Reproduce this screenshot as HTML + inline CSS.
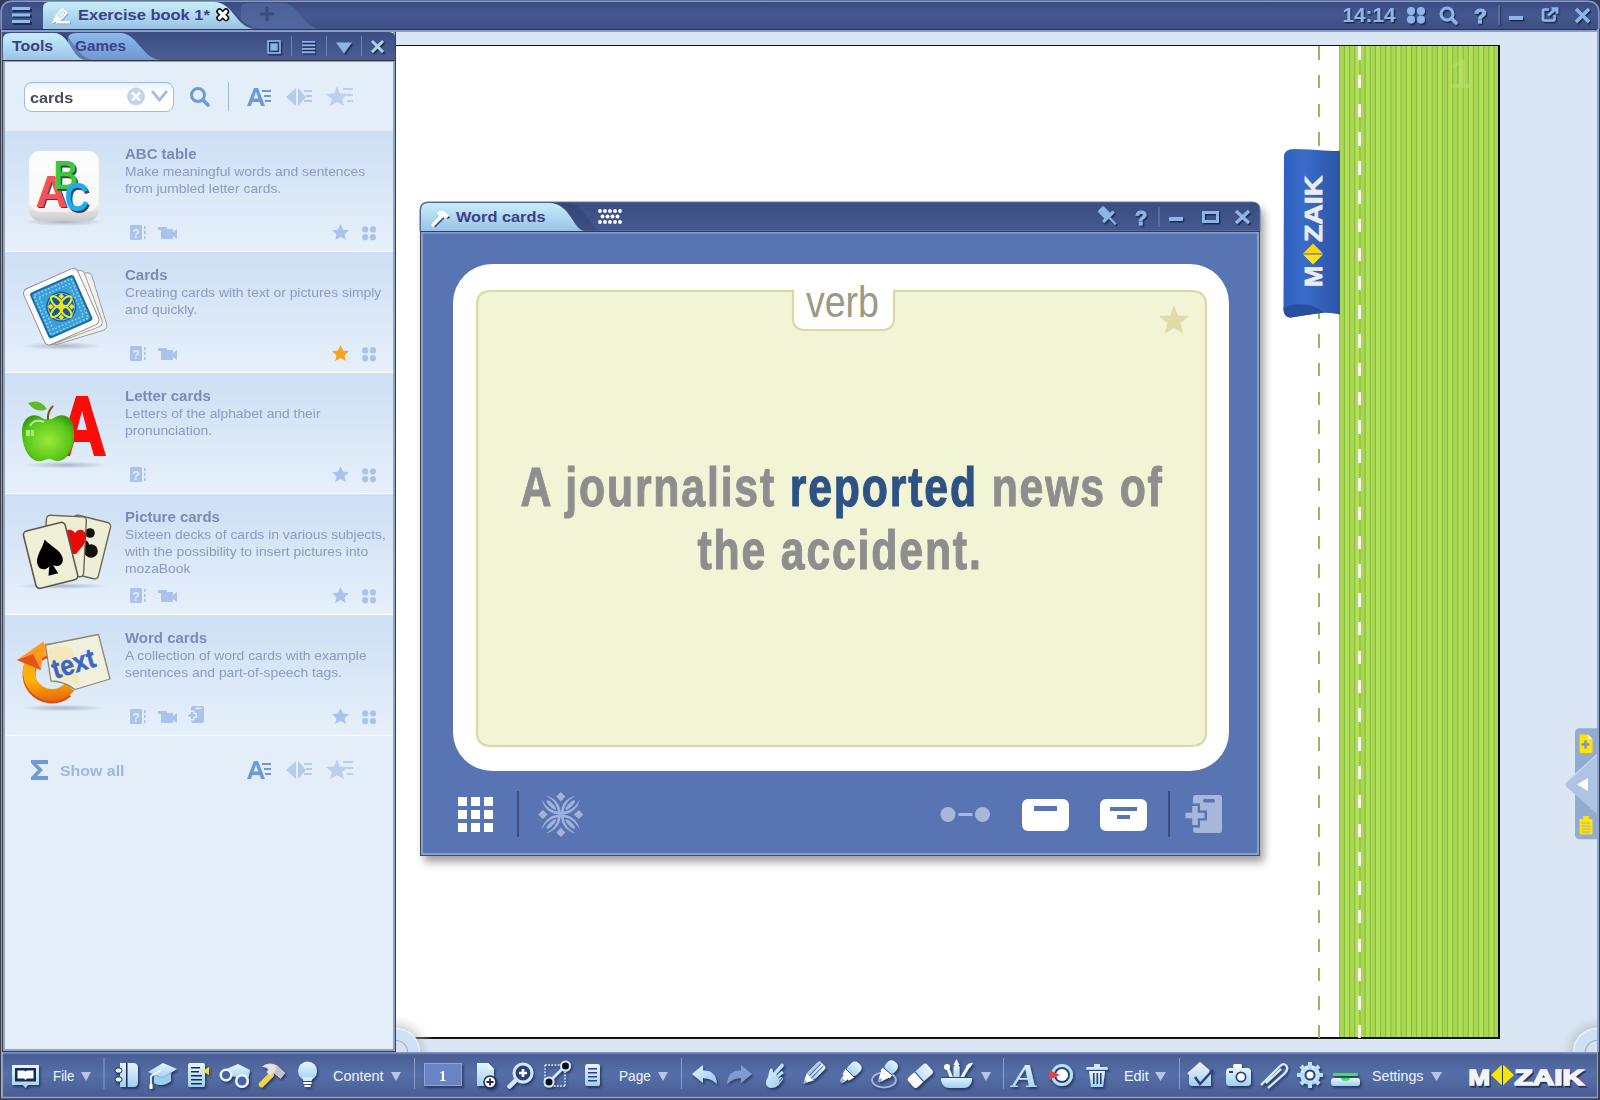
<!DOCTYPE html>
<html><head><meta charset="utf-8">
<style>
*{margin:0;padding:0;box-sizing:border-box}
html,body{width:1600px;height:1100px;overflow:hidden}
body{position:relative;background:#dbe6f4;font-family:"Liberation Sans",sans-serif}
.a{position:absolute}
svg{position:absolute;overflow:visible}
.t{position:absolute;white-space:nowrap;transform-origin:0 0}
/* panel */
#pn{left:2px;top:31px;width:394px;height:1021px;background:#e4eef9;border:1px solid #3a3f4c;border-top:none;box-shadow:inset 2px 0 0 #8fa3cc,inset -2px 0 0 #8fa3cc,inset 0 -2px 0 #8fa3cc}
#pnl{left:3px;top:61px;width:392px;height:990px;border:2px solid #8fa3cc;border-top:1px solid #8fa3cc;border-right-width:1px}
.it{position:absolute;left:5px;width:388px;height:120px;background:linear-gradient(#cddff4,#e6f0fa)}
.sep{position:absolute;left:5px;width:388px;height:1px;background:#fff}
.ti{position:absolute;margin-top:1px;left:125px;font-weight:bold;font-size:14px;color:#7a8bb6;white-space:nowrap;transform-origin:0 0;transform:scaleX(1.07)}
.ds{position:absolute;margin-top:1px;left:125px;font-size:13px;line-height:17px;color:#8a9bc1;white-space:nowrap;transform-origin:0 0;transform:scaleX(1.065)}
/* page */
#pg{left:396px;top:45px;width:1104px;height:994px;background:#fff;border-top:1px solid #111;border-right:2px solid #0a0a14;border-bottom:2px solid #111}
/* word cards window */
#wc{left:420px;top:202px;width:840px;height:654px;background:#5874b2;border:1px solid #454b5a;border-top:none;border-radius:8px 8px 0 0;box-shadow:inset 0 -2px 0 #8b9ecc,inset 2px 0 0 #8b9ecc,inset -2px 0 0 #8b9ecc,4px 6px 9px rgba(0,0,0,.38)}
#bt{left:0;top:1051px;width:1600px;height:49px}
</style></head><body>

<!-- ============ TITLE BAR ============ -->
<svg width="1600" height="32" style="left:0;top:0">
  <defs>
    <linearGradient id="gtb" x1="0" y1="0" x2="0" y2="1"><stop offset="0" stop-color="#394a7e"/><stop offset=".5" stop-color="#45588e"/><stop offset="1" stop-color="#3b4d83"/></linearGradient>
    <linearGradient id="gtab" x1="0" y1="0" x2="0" y2="1"><stop offset="0" stop-color="#c8eff9"/><stop offset="1" stop-color="#99c2e6"/></linearGradient>
    <linearGradient id="gtab2" x1="0" y1="0" x2="0" y2="1"><stop offset="0" stop-color="#4b6198"/><stop offset="1" stop-color="#51689e"/></linearGradient>
    <filter id="tsh" x="-20%" y="-20%" width="150%" height="150%"><feDropShadow dx="1.3" dy="1.5" stdDeviation=".5" flood-color="#141a3a" flood-opacity=".85"/></filter>
  </defs>
  <rect x="0" y="0" width="1600" height="30" fill="url(#gtb)"/>
  <path d="M0,13 Q0,0 13,0 L0,0Z" fill="#343c5e"/>
  <path d="M1600,13 Q1600,0 1587,0 L1600,0Z" fill="#343c5e"/>
  <path d="M1.2,30 V13 Q1.2,1.2 13,1.2 H1587 Q1598.8,1.2 1598.8,13 V30" fill="none" stroke="#8a9cc6" stroke-width="1.4"/>
  <rect x="0" y="29" width="1600" height="1" fill="#2e3340"/>
  <rect x="0" y="30" width="1600" height="2" fill="#8c9ec8"/>
  <!-- hamburger -->
  <g fill="#1f2752" opacity=".9"><rect x="13" y="9" width="19" height="3"/><rect x="13" y="15" width="19" height="3"/><rect x="13" y="22" width="19" height="3"/></g>
  <g fill="#8ebcec"><rect x="12" y="7" width="18" height="3"/><rect x="12" y="13.5" width="18" height="3"/><rect x="12" y="20" width="18" height="3"/></g>
  <!-- plus tab -->
  <path d="M241,29 V9 Q241,3 248,3 H282 C300,3 302,29 322,29 Z" fill="url(#gtab2)"/>
  <path d="M214,2 C236,2 238,29 262,29 L240,29 Z" fill="#2f3d6a" opacity=".5"/>
  <path d="M260,14 H274 M267,7 V21" stroke="#3a4c80" stroke-width="3"/>
  <!-- active tab -->
  <path d="M43,29 V8 Q43,2 49,2 H214 C234,2 236,29 256,29 Z" fill="url(#gtab)"/>
  <!-- pencil -->
  <g transform="translate(1,1)" fill="#4d7fb0" opacity=".45">
    <path d="M55.5,15.5 L62.5,8 L68,13 L61,20.5 Z M55.5,15.5 L61,20.5 L52,23 Z"/><rect x="56" y="21" width="14" height="2.4"/>
  </g>
  <path d="M55.5,15.5 L62.5,8 L68,13 L61,20.5 Z" fill="#fff"/>
  <path d="M57.8,15.3 L62.6,10.2 L65.7,13 L60.9,18.2 Z" fill="#a7d3ef"/>
  <path d="M59.2,15.2 L62.7,11.6 L64.3,13.1 L60.8,16.7 Z" fill="#fff"/>
  <path d="M55.5,15.5 L61,20.5 L52,23 Z" fill="#fff"/>
  <rect x="56" y="21" width="14" height="2.4" fill="#fff"/>
  <text x="78" y="20.2" font-family="Liberation Sans" font-weight="bold" font-size="15" fill="#3c3f8d" transform="translate(78,0) scale(1.1,1) translate(-78,0)">Exercise book 1*</text>
  <!-- tab close x -->
  <path d="M219.5,11.5 L226,18 M226,11.5 L219.5,18" stroke="#111" stroke-width="6.5" stroke-linecap="round"/>
  <path d="M219.5,11.5 L226,18 M226,11.5 L219.5,18" stroke="#fff" stroke-width="3.2" stroke-linecap="round"/>
  <!-- right side -->
  <g filter="url(#tsh)">
  <text transform="translate(1342.5,22.3) scale(1.04,1)" font-family="Liberation Sans" font-weight="bold" font-size="20" fill="#8cb6e7">14:14</text>
  <g fill="#8cb6e7">
    <circle cx="1411" cy="11" r="4"/><circle cx="1421" cy="11" r="4"/><circle cx="1411" cy="19.5" r="4"/><circle cx="1421" cy="19.5" r="4"/>
  </g>
  <g stroke="#8cb6e7" fill="none" stroke-width="3">
    <circle cx="1447" cy="14" r="6"/><path d="M1451.5,18.5 L1456,23" stroke-width="3.5" stroke-linecap="round"/>
  </g>
  <text x="1474" y="23" font-family="Liberation Sans" font-weight="bold" font-size="21" fill="#8cb6e7" stroke="#8cb6e7" stroke-width="1">?</text>
  <rect x="1498.5" y="5" width="1" height="20" fill="#6f84b5"/>
  <rect x="1509" y="16" width="14" height="4" fill="#8cb6e7"/>
  <g stroke="#8cb6e7" fill="none" stroke-width="2.6">
    <path d="M1549,9.5 H1544 Q1543,9.5 1543,11 V19 Q1543,20.5 1544.5,20.5 H1553 Q1554.5,20.5 1554.5,19 V15"/>
    <path d="M1548,15.5 L1556,8.5 M1551.5,8.5 H1557 V13.5"/>
  </g>
  <path d="M1576,9 L1589,22 M1589,9 L1576,22" stroke="#8cb6e7" stroke-width="3.2"/>
  </g>
</svg>

<!-- outer frame -->
<div class="a" style="left:0;top:29px;width:2px;height:1023px;background:#8fa3cc;border-left:1px solid #3a3d48"></div>
<div class="a" style="left:1597px;top:29px;width:3px;height:1023px;background:#8fa3cc;border-right:1px solid #3a3d48"></div>
<!-- ============ LEFT PANEL ============ -->
<div id="pn" class="a"></div>
<svg width="394" height="32" style="left:2px;top:30px">
  <defs>
    <linearGradient id="gph" x1="0" y1="0" x2="0" y2="1"><stop offset="0" stop-color="#3b4e84"/><stop offset="1" stop-color="#4a5e95"/></linearGradient>
    <linearGradient id="gtt" x1="0" y1="0" x2="0" y2="1"><stop offset="0" stop-color="#c7eef9"/><stop offset="1" stop-color="#9bc4e7"/></linearGradient>
    <linearGradient id="gtg" x1="0" y1="0" x2="0" y2="1"><stop offset="0" stop-color="#8fbaea"/><stop offset="1" stop-color="#6f97d2"/></linearGradient>
  </defs>
  <rect x="0" y="0" width="394" height="2" fill="#8c9ec8"/>
  <path d="M0,2 H387 Q393,2 393,8 V30 H0 Z" fill="url(#gph)"/>
  <rect x="0" y="30" width="394" height="1" fill="#2f3442"/>
  <rect x="1" y="31" width="392" height="1" fill="#8fa3cc"/>
  <!-- Games tab -->
  <path d="M66,30 V9 Q66,3 74,3 H118 C136,3 140,30 160,30 Z" fill="url(#gtg)"/>
  <path d="M56,3 C72,3 74,30 92,30 H70 Z" fill="#2a3868" opacity=".35"/>
  <!-- Tools tab -->
  <path d="M1,30 V9 Q1,3 9,3 H52 C68,3 70,30 84,30 Z" fill="url(#gtt)"/>
  <text x="10" y="21" font-family="Liberation Sans" font-weight="bold" font-size="15" fill="#3d3e8a" transform="translate(10,0) scale(1.06,1) translate(-10,0)">Tools</text>
  <text x="73" y="21" font-family="Liberation Sans" font-weight="bold" font-size="15" fill="#3d3e8a" transform="translate(73,0) scale(1.02,1) translate(-73,0)">Games</text>
  <!-- icons -->
  <g filter="url(#tsh)">
  <g fill="none" stroke="#8cb6e7">
    <rect x="266" y="11" width="12" height="12" stroke-width="1.6"/>
  </g>
  <rect x="268.5" y="13.5" width="7" height="7" fill="#8cb6e7"/>
  
  <g fill="#8cb6e7"><rect x="300" y="11" width="13" height="1.6"/><rect x="300" y="14.5" width="13" height="1.6"/><rect x="300" y="18" width="13" height="1.6"/><rect x="300" y="21.5" width="13" height="1.6"/></g>
  
  <path d="M334,12.5 L350,12.5 L342,23.5 Z" fill="#8cb6e7"/>
  
  <path d="M370,11 L381,22 M381,11 L370,22" stroke="#b0d3f2" stroke-width="2.8"/>
  </g>
  <g fill="#6f83b4"><rect x="289" y="6" width="1" height="20"/><rect x="324" y="6" width="1" height="20"/><rect x="359" y="6" width="1" height="20"/></g>
</svg>

<!-- search row -->
<div class="a" style="left:24px;top:82px;width:150px;height:30px;border:1.5px solid #9dbbe2;border-radius:8px;background:linear-gradient(#e8f0fa,#fff 35%,#fff)"></div>
<div class="t" style="left:30px;top:88.5px;font-weight:bold;font-size:15px;color:#4a4c5c;transform:scaleX(1.08)">cards</div>
<svg width="400" height="40" style="left:0;top:78px">
  <circle cx="136" cy="18.5" r="9" fill="#c3d4ea"/>
  <path d="M132,14.5 L140,22.5 M140,14.5 L132,22.5" stroke="#fff" stroke-width="2.6"/>
  <path d="M152,13 L159.5,22 L167,13" stroke="#a7bfe0" stroke-width="2.8" fill="none"/>
  <circle cx="198" cy="17" r="6.5" fill="none" stroke="#6d9bd9" stroke-width="3"/>
  <path d="M203,22 L208,27" stroke="#6d9bd9" stroke-width="3.6" stroke-linecap="round"/>
  <rect x="228" y="4" width="1" height="29" fill="#9ab8de"/>
  <!-- A= -->
  <path d="M247,28 L254,10 H258 L265,28 H261 L259.5,24 H252.5 L251,28 Z M253.7,20.5 H258.3 L256,14 Z" fill="#6d9bd9"/>
  <g fill="#6d9bd9"><rect x="262" y="12" width="9" height="2"/><rect x="264" y="17" width="7" height="2"/><rect x="265" y="22" width="6" height="2"/></g>
  <!-- diamond -->
  <path d="M286,19 L296,10 V28 Z M298,10 L306,19 L298,28 Z" fill="#b4cbeb"/>
  <g fill="#b4cbeb"><rect x="304" y="12" width="8" height="2"/><rect x="306" y="17" width="6" height="2"/><rect x="304" y="22" width="8" height="2"/></g>
  <!-- star -->
  <path d="M337,8 L340,15.5 L348,16 L342,21 L344,28 L337,24 L330,28 L332,21 L326,16 L334,15.5 Z" fill="#bcd0ec"/>
  <g fill="#bcd0ec"><rect x="343" y="10" width="10" height="2"/><rect x="347" y="16" width="6" height="2"/><rect x="347" y="22" width="6" height="2"/></g>
</svg>

<!-- list items -->
<div class="it" style="top:131px"></div><div class="sep" style="top:251px"></div>
<div class="it" style="top:252px"></div><div class="sep" style="top:372px"></div>
<div class="it" style="top:373px"></div><div class="sep" style="top:493px"></div>
<div class="it" style="top:494px"></div><div class="sep" style="top:614px"></div>
<div class="it" style="top:615px"></div><div class="sep" style="top:735px"></div>

<div class="ti" style="top:145px">ABC table</div>
<div class="ds" style="top:162px">Make meaningful words and sentences<br>from jumbled letter cards.</div>
<div class="ti" style="top:266px">Cards</div>
<div class="ds" style="top:283px">Creating cards with text or pictures simply<br>and quickly.</div>
<div class="ti" style="top:387px">Letter cards</div>
<div class="ds" style="top:404px">Letters of the alphabet and their<br>pronunciation.</div>
<div class="ti" style="top:508px">Picture cards</div>
<div class="ds" style="top:525px">Sixteen decks of cards in various subjects,<br>with the possibility to insert pictures into<br>mozaBook</div>
<div class="ti" style="top:629px">Word cards</div>
<div class="ds" style="top:646px">A collection of word cards with example<br>sentences and part-of-speech tags.</div>

<svg width="400" height="620" style="left:0;top:130px">
  <defs>
    <linearGradient id="gabc" x1="0" y1="0" x2="0" y2="1"><stop offset="0" stop-color="#fdfdfd"/><stop offset=".75" stop-color="#f2f2f2"/><stop offset="1" stop-color="#c9c9c9"/></linearGradient>
    <radialGradient id="gapple" cx=".5" cy=".55" r=".6"><stop offset="0" stop-color="#9be83a"/><stop offset=".7" stop-color="#5cc81a"/><stop offset="1" stop-color="#3a9a10"/></radialGradient>
    <radialGradient id="gsh" cx=".5" cy=".5" r=".5"><stop offset="0" stop-color="#7d8aa0" stop-opacity=".55"/><stop offset="1" stop-color="#7d8aa0" stop-opacity="0"/></radialGradient>
    <linearGradient id="gorange" x1="0" y1="0" x2="1" y2="1"><stop offset="0" stop-color="#ff9d2a"/><stop offset=".6" stop-color="#ffb400"/><stop offset="1" stop-color="#e25a10"/></linearGradient>
    <g id="qicon"><rect x="0" y="0" width="12" height="15" rx="1.5" fill="#a9c3ec"/><text x="2.2" y="12.5" font-family="Liberation Sans" font-weight="bold" font-size="12" fill="#e4eef9">?</text><rect x="14" y="1" width="1.6" height="3" fill="#a9c3ec"/><rect x="14" y="6" width="1.6" height="3" fill="#a9c3ec"/><rect x="14" y="11" width="1.6" height="3" fill="#a9c3ec"/></g>
    <g id="cam"><path d="M0,1 H9 V4 H0Z M3,3 H14 Q15,3 15,4 V12 Q15,13 14,13 H4 Q3,13 3,12 Z M15,6 L19,3 V13 L15,10Z" fill="#a9c3ec"/></g>
    <g id="star"><path d="M8.5,0 L11,5.6 L17,6.2 L12.5,10.2 L13.8,16 L8.5,13 L3.2,16 L4.5,10.2 L0,6.2 L6,5.6 Z"/></g>
    <g id="dots" fill="#a9c3ec"><circle cx="3.2" cy="3.4" r="3.1"/><circle cx="11" cy="3.4" r="3.1"/><circle cx="3.2" cy="11.2" r="3.1"/><circle cx="11" cy="11.2" r="3.1"/></g>
  </defs>

  <!-- item 1 ABC -->
  <ellipse cx="64" cy="92" rx="40" ry="4" fill="url(#gsh)"/>
  <rect x="29" y="21" width="70" height="70" rx="11" fill="url(#gabc)"/>
  <rect x="30" y="22" width="68" height="60" rx="10" fill="#fbfbfb" opacity=".6"/>
  <g font-family="Liberation Sans" font-weight="bold">
    <text x="37" y="78" font-size="44" fill="#4a4040">A</text>
    <text x="35.5" y="76.5" font-size="44" fill="#f2505a">A</text>
    <text x="55" y="61" font-size="40" fill="#4a4040" transform="translate(55,61) scale(.85,1) translate(-55,-61)">B</text>
    <text x="53.5" y="59.5" font-size="40" fill="#3cc83a" transform="translate(53.5,59.5) scale(.85,1) translate(-53.5,-59.5)">B</text>
    <text x="66" y="83" font-size="40" fill="#4a4040" transform="translate(66,83) scale(.85,1) translate(-66,-83)">C</text>
    <text x="64.5" y="81.5" font-size="40" fill="#17aef2" transform="translate(64.5,81.5) scale(.85,1) translate(-64.5,-81.5)">C</text>
  </g>
  <use href="#qicon" x="130" y="95"/>
  <use href="#cam" x="158" y="96"/>
  <use href="#star" x="332" y="94" fill="#a9c3ec"/>
  <use href="#dots" x="362" y="96"/>

  <!-- item 2 Cards -->
  <ellipse cx="62" cy="216" rx="40" ry="4" fill="url(#gsh)"/>
  <g transform="translate(61.5,176) rotate(-24)">
    <rect x="-24" y="-28" width="58" height="60" rx="5" fill="#f0f0f0" stroke="#9a9a9a" stroke-width=".9" transform="rotate(7 -30 30)"/>
    <rect x="-27" y="-29" width="58" height="60" rx="5" fill="#f6f6f6" stroke="#9a9a9a" stroke-width=".9" transform="rotate(3.5 -30 30)"/>
    <rect x="-30" y="-30" width="59" height="61" rx="5" fill="#fff" stroke="#8a8a8a" stroke-width=".9"/>
    <rect x="-24.5" y="-24.5" width="48" height="50" rx="3" fill="#1a6ea8"/>
    <rect x="-22.5" y="-22.5" width="44" height="46" rx="2" fill="#3aa0d8"/>
    <rect x="-21" y="-21" width="41" height="43" rx="1" fill="none" stroke="#94d0f0" stroke-width="1.6" stroke-dasharray="1.8 1.8"/>
    <rect x="-17" y="-17" width="33" height="35" fill="none" stroke="#94d0f0" stroke-width="1.4" stroke-dasharray="1.8 1.8"/>
    <circle cx="-0.5" cy="0.5" r="15" fill="#125c9a"/>
    <circle cx="-0.5" cy="0.5" r="13.2" fill="none" stroke="#8fc3e6" stroke-width=".9"/>
    <g transform="translate(-0.5,0.5) rotate(24)">
    <g fill="none" stroke="#f3e41c" stroke-width="2.1">
      <ellipse cx="-4.5" cy="-4.5" rx="7.5" ry="3.6" transform="rotate(45 -4.5 -4.5)"/><ellipse cx="4.5" cy="4.5" rx="7.5" ry="3.6" transform="rotate(45 4.5 4.5)"/>
      <ellipse cx="4.5" cy="-4.5" rx="7.5" ry="3.6" transform="rotate(-45 4.5 -4.5)"/><ellipse cx="-4.5" cy="4.5" rx="7.5" ry="3.6" transform="rotate(-45 -4.5 4.5)"/>
    </g>
    <g fill="#f3e41c"><rect x="-2" y="-12.5" width="4" height="4" transform="rotate(45 0 -10.5)"/><rect x="-2" y="8.5" width="4" height="4" transform="rotate(45 0 10.5)"/><rect x="-12.5" y="-2" width="4" height="4" transform="rotate(45 -10.5 0)"/><rect x="8.5" y="-2" width="4" height="4" transform="rotate(45 10.5 0)"/></g>
    </g>
  </g>
  <use href="#qicon" x="130" y="216"/>
  <use href="#cam" x="158" y="217"/>
  <use href="#star" x="332" y="215" fill="#f7a21b"/>
  <use href="#dots" x="362" y="217"/>

  <!-- item 3 Letter cards -->
  <ellipse cx="66" cy="335" rx="42" ry="3.5" fill="url(#gsh)"/>
  <path d="M76,266 H88 L106,326 H94 L90,312 H74 L70,326 H58 Z M77,300 H87 L82,281 Z" fill="#ff0a0a"/>
  <path d="M42,288 C34,282 22,286 22,302 C22,318 30,332 40,331 C44,331 46,329 49,329 C52,329 54,331 58,331 C68,331 75,316 74,302 C74,286 62,282 54,288 C50,290 46,290 42,288 Z" fill="url(#gapple)"/>
  <path d="M30,296 Q34,288 44,292" stroke="#e4ffc8" stroke-width="2" fill="none" opacity=".7"/>
  <rect x="26" y="300" width="4" height="6" fill="#d9f7b9" opacity=".7"/><rect x="31" y="300" width="3" height="6" fill="#d9f7b9" opacity=".6"/>
  <path d="M48,290 Q47,282 53,276" stroke="#7a5a10" stroke-width="2" fill="none"/>
  <path d="M28,273 Q40,268 47,279 Q36,284 28,273 Z" fill="#5dbb2a"/>
  <use href="#qicon" x="130" y="337"/>
  <use href="#star" x="332" y="336" fill="#a9c3ec"/>
  <use href="#dots" x="362" y="338"/>

  <!-- item 4 Picture cards -->
  <ellipse cx="63" cy="456" rx="46" ry="3" fill="url(#gsh)"/>
  <rect x="67" y="388" width="38" height="58" rx="4" fill="#eeeed6" stroke="#6b6656" stroke-width="1.4" transform="rotate(14 86 417)"/>
  <circle cx="90" cy="403" r="4.8" fill="#111"/><circle cx="91" cy="421" r="6.8" fill="#111"/><circle cx="84" cy="415" r="5" fill="#111"/>
  <rect x="45" y="386" width="40" height="60" rx="4" fill="#eeeed6" stroke="#6b6656" stroke-width="1.4" transform="rotate(3 65 416)"/>
  <path d="M73,424 C68,418 63,414 63,407 C63,402 67,399 71,400 C73,400.5 74,402 75,403 C76,402 77,400.5 79,400 C83,399 86,402 86,407 C86,414 81,418 76,424 Z" fill="#e80a0a"/>
  <rect x="29" y="396" width="43" height="59" rx="4" fill="#efefd7" stroke="#5d584a" stroke-width="1.6" transform="rotate(-14 50 425)"/>
  <g transform="translate(49,427) rotate(-14)">
    <path d="M0,-18 C-4,-10 -13,-4 -13,4 C-13,10 -7,13 -2,9 L-5,18 H5 L2,9 C7,13 13,10 13,4 C13,-4 4,-10 0,-18 Z" fill="#000"/>
  </g>
  <use href="#qicon" x="130" y="458"/>
  <use href="#cam" x="158" y="459"/>
  <use href="#star" x="332" y="457" fill="#a9c3ec"/>
  <use href="#dots" x="362" y="459"/>

  <!-- item 5 Word cards -->
  <ellipse cx="62" cy="578" rx="42" ry="3.5" fill="url(#gsh)"/>
  <circle cx="52" cy="544" r="23" fill="none" stroke="#d8501a" stroke-width="13" stroke-dasharray="120 200" transform="rotate(50 52 544)"/>
  <circle cx="52" cy="542" r="23" fill="none" stroke="url(#gorange)" stroke-width="12" stroke-dasharray="122 200" transform="rotate(40 52 542)"/>
  <path d="M17,530 L44,511 L41,540 Z" fill="#ff9a1e"/>
  <path d="M17,530 L33,524 L41,540 Z" fill="#e2541a"/>
  <path d="M45.5,515 L98.5,504.5 L110,549 L75,559.5 Q64,551 51,551 Z" fill="#f0f0dc" stroke="#8a8a74" stroke-width="1.3" stroke-linejoin="round"/>
  <path d="M48,520 Q60,512 72,518 L80,556 Q66,548 56,550 Z" fill="#f7e3b0" opacity=".7"/>
  <text transform="translate(55,549) rotate(-17) scale(.9,1)" font-family="Liberation Sans" font-weight="bold" font-size="27.5" fill="#3a66c8" stroke="#3a66c8" stroke-width=".6">text</text>
  <use href="#qicon" x="130" y="579"/>
  <use href="#cam" x="158" y="580"/>
  <path d="M193,576 H202 Q204,576 204,578 V591 Q204,593 202,593 H193 Q191,593 191,591 V578 Q191,576 193,576 Z" fill="#a9c3ec"/>
  <rect x="195.5" y="577.5" width="6" height="1.6" fill="#e4eef9"/>
  <path d="M187,585.5 H197 M192,580.5 V590.5" stroke="#e4eef9" stroke-width="5"/>
  <path d="M188.5,585.5 H195.5 M192,582 V589" stroke="#a9c3ec" stroke-width="2.4"/>
  <use href="#star" x="332" y="578" fill="#a9c3ec"/>
  <use href="#dots" x="362" y="580"/>
</svg>


<!-- show all -->
<svg width="400" height="40" style="left:0;top:750px">
  <path d="M31,10 H48 V14 H37 L43,20 L37,26 H48 V30 H31 V27 L38,20 L31,13 Z" fill="#6d9bd9"/>
  <path d="M247,29 L254,11 H258 L265,29 H261 L259.5,25 H252.5 L251,29 Z M253.7,21.5 H258.3 L256,15 Z" fill="#6d9bd9"/>
  <g fill="#6d9bd9"><rect x="262" y="13" width="9" height="2"/><rect x="264" y="18" width="7" height="2"/><rect x="265" y="23" width="6" height="2"/></g>
  <path d="M286,20 L296,11 V29 Z M298,11 L306,20 L298,29 Z" fill="#b4cbeb"/>
  <g fill="#b4cbeb"><rect x="304" y="13" width="8" height="2"/><rect x="306" y="18" width="6" height="2"/><rect x="304" y="23" width="8" height="2"/></g>
  <path d="M337,9 L340,16.5 L348,17 L342,22 L344,29 L337,25 L330,29 L332,22 L326,17 L334,16.5 Z" fill="#bcd0ec"/>
  <g fill="#bcd0ec"><rect x="343" y="11" width="10" height="2"/><rect x="347" y="17" width="6" height="2"/><rect x="347" y="23" width="6" height="2"/></g>
</svg>
<div class="t" style="left:60px;top:762px;font-weight:bold;font-size:15px;color:#9db8e2;transform:scaleX(1.06)">Show all</div>

<!-- ============ PAGE ============ -->
<div id="pg" class="a"></div>
<div class="a" style="left:1318px;top:46px;width:2px;height:992px;background:repeating-linear-gradient(#8fbd5a 0 13.5px,transparent 13.5px 28.8px)"></div>
<svg width="159" height="991" style="left:1339px;top:46px;overflow:hidden"><rect x="0" y="0" width="159" height="991" fill="#acd455"/><rect x="5.90" y="0" width="4.66" height="991" fill="#b4e055"/><rect x="16.22" y="0" width="4.66" height="991" fill="#b4e055"/><rect x="26.54" y="0" width="4.66" height="991" fill="#b4e055"/><rect x="36.86" y="0" width="4.66" height="991" fill="#b4e055"/><rect x="47.18" y="0" width="4.66" height="991" fill="#b4e055"/><rect x="57.50" y="0" width="4.66" height="991" fill="#b4e055"/><rect x="67.82" y="0" width="4.66" height="991" fill="#b4e055"/><rect x="78.14" y="0" width="4.66" height="991" fill="#b4e055"/><rect x="88.46" y="0" width="4.66" height="991" fill="#b4e055"/><rect x="98.78" y="0" width="4.66" height="991" fill="#b4e055"/><rect x="109.10" y="0" width="4.66" height="991" fill="#b4e055"/><rect x="119.42" y="0" width="4.66" height="991" fill="#b4e055"/><rect x="129.74" y="0" width="4.66" height="991" fill="#b4e055"/><rect x="140.06" y="0" width="4.66" height="991" fill="#b4e055"/><rect x="150.38" y="0" width="4.66" height="991" fill="#b4e055"/><rect x="-0.31" y="0" width="1.1" height="991" fill="#80c03e"/><rect x="4.85" y="0" width="1.1" height="991" fill="#80c03e"/><rect x="10.01" y="0" width="1.1" height="991" fill="#80c03e"/><rect x="15.17" y="0" width="1.1" height="991" fill="#80c03e"/><rect x="20.33" y="0" width="1.1" height="991" fill="#80c03e"/><rect x="25.49" y="0" width="1.1" height="991" fill="#80c03e"/><rect x="30.65" y="0" width="1.1" height="991" fill="#80c03e"/><rect x="35.81" y="0" width="1.1" height="991" fill="#80c03e"/><rect x="40.97" y="0" width="1.1" height="991" fill="#80c03e"/><rect x="46.13" y="0" width="1.1" height="991" fill="#80c03e"/><rect x="51.29" y="0" width="1.1" height="991" fill="#80c03e"/><rect x="56.45" y="0" width="1.1" height="991" fill="#80c03e"/><rect x="61.61" y="0" width="1.1" height="991" fill="#80c03e"/><rect x="66.77" y="0" width="1.1" height="991" fill="#80c03e"/><rect x="71.93" y="0" width="1.1" height="991" fill="#80c03e"/><rect x="77.09" y="0" width="1.1" height="991" fill="#80c03e"/><rect x="82.25" y="0" width="1.1" height="991" fill="#80c03e"/><rect x="87.41" y="0" width="1.1" height="991" fill="#80c03e"/><rect x="92.57" y="0" width="1.1" height="991" fill="#80c03e"/><rect x="97.73" y="0" width="1.1" height="991" fill="#80c03e"/><rect x="102.89" y="0" width="1.1" height="991" fill="#80c03e"/><rect x="108.05" y="0" width="1.1" height="991" fill="#80c03e"/><rect x="113.21" y="0" width="1.1" height="991" fill="#80c03e"/><rect x="118.37" y="0" width="1.1" height="991" fill="#80c03e"/><rect x="123.53" y="0" width="1.1" height="991" fill="#80c03e"/><rect x="128.69" y="0" width="1.1" height="991" fill="#80c03e"/><rect x="133.85" y="0" width="1.1" height="991" fill="#80c03e"/><rect x="139.01" y="0" width="1.1" height="991" fill="#80c03e"/><rect x="144.17" y="0" width="1.1" height="991" fill="#80c03e"/><rect x="149.33" y="0" width="1.1" height="991" fill="#80c03e"/><rect x="154.49" y="0" width="1.1" height="991" fill="#80c03e"/></svg>
<div class="a" style="left:1358px;top:46px;width:3px;height:992px;background:repeating-linear-gradient(#fbfdf5 0 13.5px,transparent 13.5px 28.8px)"></div>
<div class="t" style="left:1450px;top:52px;font-weight:bold;font-size:40px;color:#bde070;opacity:.55">1</div>
<!-- ribbon -->
<svg width="70" height="180" style="left:1280px;top:145px">
  <defs>
    <linearGradient id="grib" x1="0" y1="0" x2="1" y2="0"><stop offset="0" stop-color="#2f5fc0"/><stop offset=".35" stop-color="#3a6cc9"/><stop offset="1" stop-color="#2a54a6"/></linearGradient>
  </defs>
  <path d="M4,12 Q4,4 14,4 Q30,4 44,5.5 Q52,6.3 60,5.8 V169.5 Q50,167 40,168 Q22,170.5 10,172.5 Q3.5,171.5 3.5,164 Z" fill="url(#grib)"/>
  <path d="M3.5,163 Q12,157.5 28,160 Q38,162 44,167.8 Q24,170.5 10,172.8 Q3,171.5 3.5,163 Z" fill="#2a4f9e"/>
  <g transform="translate(42,142) rotate(-90)">
    <g font-family="Liberation Sans" font-weight="bold" font-size="24.5" fill="#ececf0" stroke="#ececf0" stroke-width=".8">
    <text transform="scale(1.05,1)">M</text>
    <text transform="translate(45,0) scale(1.16,1)">ZAIK</text>
    </g>
    <path d="M22.5,-9 L32.4,-19 V1 Z" fill="#ffe01a"/>
    <path d="M33.6,-19 L43.5,-9 L33.6,1 Z" fill="#ffd400"/>
  </g>
</svg>
<!-- bottom-left/right round buttons -->
<svg width="60" height="40" style="left:396px;top:1012px;overflow:hidden">
  <defs><radialGradient id="gcs" cx="0" cy="40" r="40" gradientUnits="userSpaceOnUse"><stop offset=".55" stop-color="#9aa0a8" stop-opacity=".55"/><stop offset="1" stop-color="#fff" stop-opacity="0"/></radialGradient></defs>
  <circle cx="0" cy="40" r="40" fill="url(#gcs)"/>
  <circle cx="0" cy="40" r="23.5" fill="#cde0f5" stroke="#e6f2fc" stroke-width="1.5"/>
  <circle cx="0" cy="40" r="11.5" fill="#d8e2ec" stroke="#9eaec4" stroke-width="1.2"/>
</svg>
<svg width="60" height="40" style="left:1537px;top:1012px;overflow:hidden">
  <defs><radialGradient id="gcs2" cx="60" cy="40" r="40" gradientUnits="userSpaceOnUse"><stop offset=".55" stop-color="#9aa0a8" stop-opacity=".5"/><stop offset="1" stop-color="#dbe6f4" stop-opacity="0"/></radialGradient></defs>
  <circle cx="60" cy="40" r="40" fill="url(#gcs2)"/>
  <circle cx="60" cy="40" r="23.5" fill="#cde0f5" stroke="#e6f2fc" stroke-width="1.5"/>
  <circle cx="60" cy="40" r="11.5" fill="#d8e2ec" stroke="#9eaec4" stroke-width="1.2"/>
</svg>
<!-- right side tab -->
<svg width="35" height="120" style="left:1562px;top:725px;overflow:hidden">
  <rect x="13" y="3.3" width="30" height="111" rx="4.5" fill="#92abd3"/>
  <path d="M36,28.6 L4.5,57.3 Q2.4,59.5 4.5,61.7 L36,90 Z" fill="#afc4e3"/>
  <path d="M36,28.6 L4.5,57.3 Q3.5,58.3 3.6,59" stroke="#c9daf0" stroke-width="1.2" fill="none"/>
  <path d="M15,59.5 L26,53 V66 Z" fill="#fff"/>
  <path d="M17.5,9.5 H26 L30.5,14 V27 Q30.5,28 29.5,28 H18.5 Q17.5,28 17.5,27 Z" fill="#ffe400"/>
  <path d="M26,9.5 V14 H30.5 Z" fill="#fff8b0"/>
  <path d="M19.5,19.5 H27.5 M23.5,15.5 V23.5" stroke="#7d96c6" stroke-width="2.6"/>
  <path d="M17.5,94 H30.5 V108.5 Q30.5,109.5 29.5,109.5 H18.5 Q17.5,109.5 17.5,108.5 Z M21,91 H27 V95 H21 Z" fill="#ffe400"/>
  <g stroke="#9fb2cf" stroke-width="1.1"><path d="M19.5,98 H28.5 M19.5,101 H28.5 M19.5,104 H28.5 M19.5,107 H28.5"/></g>
</svg>


<!-- ============ WORD CARDS WINDOW ============ -->
<div id="wc" class="a"></div>
<svg width="842" height="660" style="left:419px;top:201px">
  <defs>
    <linearGradient id="gwh" x1="0" y1="0" x2="0" y2="1"><stop offset="0" stop-color="#3a4c82"/><stop offset="1" stop-color="#46598f"/></linearGradient>
    <linearGradient id="gwt" x1="0" y1="0" x2="0" y2="1"><stop offset="0" stop-color="#c6eef9"/><stop offset="1" stop-color="#9bc3e6"/></linearGradient>
  </defs>
  <path d="M1,30 V9 Q1,1 9,1 H833 Q841,1 841,9 V30 Z" fill="url(#gwh)" stroke="#6a76a0" stroke-width="1"/>
  <path d="M2,30 V9 Q2,2 9,2 H130 C152,2 154,30 166,30 Z" fill="url(#gwt)"/>
  <path d="M131,2 C153,2 155,30 168,30 H185 C170,30 168,2 146,2 Z" fill="#2b3a6a" opacity=".35"/>
  <rect x="1" y="30" width="840" height="1" fill="#353b4a"/>
  <rect x="2" y="31" width="838" height="1.5" fill="#8b9dca"/>
  <!-- hammer -->
  <g transform="translate(12,8)">
    <path d="M2,16 L11,7" stroke="#1c3c70" stroke-width="3.4" transform="translate(1.2,1.2)" opacity=".8"/>
    <path d="M2,16 L11,7" stroke="#fff" stroke-width="3.2" stroke-linecap="round"/>
    <path d="M6,4 Q10,0 14,3 L18,7 L15,10 L12,7 L9,8 Z" fill="#fff"/>
    <path d="M15,10 L18,7 L19,9 Z" fill="#1c3c70"/>
  </g>
  <text x="37" y="21" font-family="Liberation Sans" font-weight="bold" font-size="15" fill="#3c3f8c" transform="translate(37,0) scale(1.09,1) translate(-37,0)">Word cards</text>
  <!-- dots keyboard icon -->
  <g fill="#fff">
    <circle cx="181" cy="10" r="1.95"/><circle cx="186" cy="10" r="1.95"/><circle cx="191" cy="10" r="1.95"/><circle cx="196" cy="10" r="1.95"/><circle cx="201" cy="10" r="1.95"/>
    <circle cx="183.5" cy="15.5" r="1.95"/><circle cx="188.5" cy="15.5" r="1.95"/><circle cx="193.5" cy="15.5" r="1.95"/><circle cx="198.5" cy="15.5" r="1.95"/>
    <circle cx="181" cy="21" r="1.95"/><circle cx="186" cy="21" r="1.95"/><circle cx="191" cy="21" r="1.95"/><circle cx="196" cy="21" r="1.95"/><circle cx="201" cy="21" r="1.95"/>
  </g>
  <!-- right header icons -->
  <g filter="url(#tsh)">
  <g transform="rotate(-45 689 14)">
    <rect x="684" y="4" width="8" height="11" rx="1.5" fill="#8cb6e7"/>
    <rect x="680.5" y="14" width="15" height="3.2" rx="1" fill="#8cb6e7"/>
    <rect x="687" y="17" width="2" height="9" fill="#8cb6e7"/>
  </g>
  <text x="716" y="23.5" font-family="Liberation Sans" font-weight="bold" font-size="20" fill="#8cb6e7" stroke="#8cb6e7" stroke-width=".9">?</text>
  <rect x="750" y="16" width="14" height="4" fill="#8cb6e7"/>
  <rect x="784.5" y="11.5" width="14" height="9" fill="none" stroke="#8cb6e7" stroke-width="3"/>
  <path d="M817,10 L830,22 M830,10 L817,22" stroke="#8cb6e7" stroke-width="3.2"/>
  </g>
  <rect x="739.5" y="6" width="1" height="20" fill="#6f84b5"/>

  <!-- card -->
  <rect x="34" y="63" width="776" height="507" rx="39" fill="#fff"/>
  <path d="M374,90 H72 Q58,90 58,104 V531 Q58,545 72,545 H772 Q787,545 787,531 V104 Q787,90 772,90 H475" fill="#f2f4d6" stroke="#dcd8a2" stroke-width="2.2"/>
  <path d="M374,88.5 V117 Q374,129 386,129 H463 Q475,129 475,117 V88.5" fill="#fff" stroke="#dcd8a2" stroke-width="2.2"/>
  <rect x="376" y="86" width="98" height="4" fill="#fff"/>
  <text x="387" y="116" font-family="Liberation Sans" font-size="44" fill="#9a9a86" transform="translate(387,0) scale(.853,1) translate(-387,0)">verb</text>
  <path d="M755,104 L759,114.5 L770,115 L761.5,122 L764.5,133 L755,127 L745.5,133 L748.5,122 L740,115 L751,114.5 Z" fill="#e0dca9"/>
  <g font-family="Liberation Sans" font-weight="bold" font-size="56.3" fill="#8e8e8e" stroke="#8e8e8e" stroke-width="1.1">
    <text letter-spacing="2.4" transform="translate(101.4,305.4) scale(.76,1)">A journalist <tspan fill="#2d5283" stroke="#2d5283">reported</tspan> news of</text>
    <text letter-spacing="2.4" transform="translate(278.4,368.4) scale(.76,1)">the accident.</text>
  </g>

  <!-- bottom bar -->
  <g fill="#fff">
    <rect x="39" y="596" width="9" height="9"/><rect x="52" y="596" width="9" height="9"/><rect x="65" y="596" width="9" height="9"/>
    <rect x="39" y="609" width="9" height="9"/><rect x="52" y="609" width="9" height="9"/><rect x="65" y="609" width="9" height="9"/>
    <rect x="39" y="622" width="9" height="9"/><rect x="52" y="622" width="9" height="9"/><rect x="65" y="622" width="9" height="9"/>
  </g>
  <rect x="98" y="590" width="2" height="46" fill="#3d4c78"/>
  <g transform="translate(141.8,613.5)" fill="#a2b3d9">
    <path d="M0,-22.5 L4.5,-18 L0,-13 L-4.5,-18Z M0,22.5 L4.5,18 L0,13 L-4.5,18Z M-22.5,0 L-18,4.5 L-13,0 L-18,-4.5Z M22.5,0 L18,4.5 L13,0 L18,-4.5Z"/>
    <g id="petal">
      <path d="M0,0 C0,-10 -6,-17 -15,-19 C-6.5,-14 -3,-9 -2.6,0 Z" />
      <path d="M0,0 C-10,0 -17,-6 -19,-15 C-14,-6.5 -9,-3 0,-2.6 Z" />
      <ellipse cx="-9.5" cy="-9.5" rx="6.5" ry="1.8" transform="rotate(45 -9.5 -9.5)"/>
    </g>
    <use href="#petal" transform="scale(-1,1)"/>
    <use href="#petal" transform="scale(1,-1)"/>
    <use href="#petal" transform="scale(-1,-1)"/>
  </g>
  <g fill="#a8b8dc">
    <circle cx="529" cy="613.5" r="7.5"/><circle cx="563.5" cy="613.5" r="7.5"/><rect x="539.5" y="612" width="14" height="3"/>
  </g>
  <rect x="603" y="598" width="47" height="32" rx="6" fill="#fff"/>
  <rect x="615" y="605" width="23" height="5" fill="#5874b2"/>
  <rect x="681" y="598" width="47" height="32" rx="6" fill="#fff"/>
  <rect x="691" y="606" width="27" height="4" fill="#5874b2"/>
  <rect x="698" y="614" width="13" height="4" fill="#5874b2"/>
  <rect x="749" y="590" width="2" height="46" fill="#3d4c78"/>
  <path d="M777,594 H800 Q803,594 803,597 V629 Q803,632 800,632 H777 Q774,632 774,629 V597 Q774,594 777,594 Z" fill="#a7b6db"/>
  <rect x="784" y="598" width="12" height="3.4" rx="1.5" fill="#5874b2"/>
  <path d="M764,614.5 H788 M776,602.5 V626.5" stroke="#5874b2" stroke-width="10"/>
  <path d="M766.5,614.5 H785.5 M776,605 V624" stroke="#a7b6db" stroke-width="5.5"/>
</svg>


<!-- ============ BOTTOM TOOLBAR ============ -->
<svg width="1600" height="50" style="left:0;top:1050px">
  <defs>
    <linearGradient id="gbt" x1="0" y1="0" x2="0" y2="1"><stop offset="0" stop-color="#475b91"/><stop offset=".5" stop-color="#566fa8"/><stop offset="1" stop-color="#485d94"/></linearGradient>
    <linearGradient id="gic" x1="0" y1="0" x2="0" y2="1"><stop offset="0" stop-color="#e6f6fd"/><stop offset="1" stop-color="#9fd0f2"/></linearGradient>
    <linearGradient id="gic2" x1="0" y1="0" x2="1" y2="1"><stop offset="0" stop-color="#eaf8fe"/><stop offset="1" stop-color="#93c6ee"/></linearGradient>
    <filter id="sh" x="-30%" y="-30%" width="160%" height="160%"><feDropShadow dx="1.5" dy="2" stdDeviation="1" flood-color="#1a2448" flood-opacity=".7"/></filter>
  </defs>
  <rect x="0" y="2" width="1600" height="48" fill="#3b404c"/>
  <rect x="1" y="2" width="1597" height="46.3" fill="#8fa3cc"/>
  <rect x="3" y="2" width="1594" height="44.8" fill="url(#gbt)"/>
  <rect x="3" y="2" width="1594" height="1.6" fill="#8a9cc8" opacity=".85"/>
  <rect x="3" y="3.6" width="1594" height="1" fill="#6a80b4" opacity=".5"/>
  <!-- separators -->
  <g fill="#9aaad0" opacity=".8">
    <rect x="103.5" y="8" width="1" height="31"/><rect x="414" y="8" width="1" height="31"/><rect x="681" y="8" width="1" height="31"/><rect x="1003" y="8" width="1" height="31"/><rect x="1179" y="8" width="1" height="31"/>
  </g>
  <g font-family="Liberation Sans" font-size="15.5" fill="#eef4ff">
    <text x="53" y="31" transform="translate(53,0) scale(.86,1) translate(-53,0)">File</text>
    <text x="333" y="31" transform="translate(333,0) scale(.93,1) translate(-333,0)">Content</text>
    <text x="619" y="31" transform="translate(619,0) scale(.88,1) translate(-619,0)">Page</text>
    <text x="1124" y="31" transform="translate(1124,0) scale(.93,1) translate(-1124,0)">Edit</text>
    <text x="1372" y="31" transform="translate(1372,0) scale(.92,1) translate(-1372,0)">Settings</text>
  </g>
  <g fill="#b9c5e2">
    <path d="M81,22 H91 L86,31 Z"/><path d="M391,22 H401 L396,31 Z"/><path d="M658,22 H668 L663,31 Z"/><path d="M981,22 H991 L986,31 Z"/><path d="M1155,22 H1166 L1160.5,31 Z"/><path d="M1431,22 H1442 L1436.5,31 Z"/>
  </g>
  <g filter="url(#sh)">
    <!-- book -->
    <path d="M12,15 H39 V35 H28 L25.5,38 L23,35 H12 Z" fill="url(#gic)"/>
    <rect x="15" y="18" width="21" height="13.5" fill="#1e2a52"/>
    <path d="M17.5,20.5 H24 L25.5,21.5 L27,20.5 H33.5 V28.5 H27 L25.5,30 L24,28.5 H17.5 Z" fill="#fff"/>
    <!-- notebook -->
    <path d="M120,13 H133 Q138,13 138,18 V32 Q138,37 133,37 H120 Z" fill="url(#gic)"/>
    <rect x="126" y="13" width="1.5" height="24" fill="#1e2a52"/>
    <rect x="115" y="18" width="7" height="5" rx="2.5" fill="#e8f6fd" stroke="#1e2a52" stroke-width="1"/>
    <rect x="115" y="27" width="7" height="5" rx="2.5" fill="#e8f6fd" stroke="#1e2a52" stroke-width="1"/>
    <!-- grad cap -->
    <path d="M148,22 L163,13 L177,19 L162,28 Z" fill="url(#gic)"/>
    <path d="M154,25 V33 Q162,38 171,31 V23 L162,28 Z" fill="#9fd0f2"/>
    <path d="M161,20 L151,26 V36" stroke="#fff" stroke-width="1.6" fill="none"/>
    <rect x="149.5" y="34" width="3" height="5" rx="1" fill="#fff"/>
    <!-- doc with arrow -->
    <rect x="188" y="13" width="17" height="24" rx="2" fill="url(#gic)"/>
    <g fill="#1e2a52"><rect x="191" y="17" width="9" height="1.5"/><rect x="191" y="21" width="8" height="1.5"/><rect x="191" y="25" width="11" height="1.5"/><rect x="191" y="29" width="11" height="1.5"/><rect x="191" y="33" width="11" height="1.5"/></g>
    <path d="M209,17 L203,21 L209,25 Z" fill="#f4e21c"/>
    <!-- binoculars -->
    <path d="M224,20 L238,14 L250,20 L248,30 L232,26 Z" fill="url(#gic)"/>
    <circle cx="226" cy="25" r="6.5" fill="#e8f6fd"/><circle cx="226" cy="25" r="4" fill="#4a64a8"/>
    <circle cx="242" cy="31" r="7" fill="#e8f6fd"/><circle cx="242" cy="31" r="4.5" fill="#4a64a8"/>
    <!-- hammer -->
    <path d="M261.5,34.5 L271,25" stroke="#f2d446" stroke-width="5.5" stroke-linecap="round"/>
    <path d="M262,16.5 Q269,11 277,15.5 L285,23 L280.5,28.5 L274,23 L270,25.5 L266.5,22 L268.5,19.5 Q266,17 262,16.5 Z" fill="#e2e2e4"/>
    <path d="M277,15.5 L285,23 L280.5,28.5 L274,23 Z" fill="#c4c4c8"/>
    <!-- bulb -->
    <circle cx="307.5" cy="21" r="9.5" fill="url(#gic)"/>
    <path d="M302,27 H313 L311.5,31 H303.5 Z" fill="#cfeafb"/>
    <rect x="303.5" y="32" width="8" height="2" fill="#fff"/><rect x="304.5" y="35" width="6" height="2" fill="#fff"/>
    <!-- page box -->
    <rect x="424.5" y="13.5" width="37" height="22" fill="#6984c2" stroke="#8da5d8" stroke-width="1"/>
    <text x="439" y="31" font-family="Liberation Serif" font-weight="bold" font-size="15" fill="#fff">1</text>
    <!-- new page -->
    <path d="M477,13 H488 L494,19 V36 H477 Z" fill="url(#gic)"/>
    <path d="M488,13 V19 H494 Z" fill="#fff"/>
    <circle cx="490" cy="32" r="6" fill="#fff" stroke="#1e2a52" stroke-width="1.5"/>
    <path d="M486.5,32 H493.5 M490,28.5 V35.5" stroke="#1e2a52" stroke-width="1.8"/>
    <!-- zoom -->
    <circle cx="523" cy="23" r="9" fill="#2f4078" stroke="#cfeafb" stroke-width="3"/>
    <path d="M519,23 H527 M523,19 V27" stroke="#fff" stroke-width="2.6"/>
    <path d="M515.5,30.5 L509.5,36.5" stroke="#cfeafb" stroke-width="4.5" stroke-linecap="round"/>
    <!-- selection -->
    <path d="M545,15 H565 M565,36 H545 M545,15 V36 M565,15 V36" stroke="#e8f6fd" stroke-width="1.4" stroke-dasharray="1.6 1.6" fill="none"/>
    <path d="M549,32 L566,15" stroke="#cfeafb" stroke-width="2.5"/>
    <circle cx="549" cy="32" r="4.5" fill="#111" stroke="#cfeafb" stroke-width="2"/>
    <circle cx="565.5" cy="16" r="4.5" fill="#111" stroke="#cfeafb" stroke-width="2"/>
    <!-- list doc -->
    <rect x="585" y="14" width="15" height="22" rx="2.5" fill="url(#gic)"/>
    <g fill="#2f4078"><rect x="588" y="18" width="9" height="1.5"/><rect x="588" y="22" width="9" height="1.5"/><rect x="588" y="26" width="9" height="1.5"/><rect x="588" y="30" width="9" height="1.5"/></g>
    <!-- undo -->
    <path d="M692,24 L703,15 V20.5 Q716,20 717,34 Q711,28 703,28 V33 Z" fill="url(#gic2)"/>
    <!-- redo -->
    <path d="M752,24 L741,15 V20.5 Q728,20 727,34 Q733,28 741,28 V33 Z" fill="#8aa4d4" opacity=".85"/>
    <!-- hand -->
    <path d="M781.5,13.5 Q784.5,13.5 783.5,16.5 L777,24 L780.5,21 Q783.5,20.5 783.5,23.5 L780,27 Q783.5,26.5 783,29.5 L778.5,35 Q775,38.5 771,38 Q767,37.5 766,34 Q765.5,30 768,27 L769.5,20.5 Q770.5,17.5 772.5,19 L773,23 Z" fill="url(#gic2)"/>
    <path d="M776.3,25 L781,20.8 M778.3,28.3 L782.4,24.6 M779.3,31.2 L782.6,28" stroke="#1e2a52" stroke-width="1"/>
  </g>
  <g filter="url(#sh)">
    <!-- pencil -->
    <g transform="translate(813,24) rotate(45)">
      <rect x="-5" y="-14" width="10" height="18" rx="3" fill="url(#gic)"/>
      <rect x="-5" y="-14" width="3.4" height="18" rx="1.5" fill="#b7c8ee"/>
      <path d="M-5,4 L5,4 L0,13.5 Z" fill="#fff"/>
      <path d="M-2,9.8 L2,9.8 L0,13.5 Z" fill="#8fb0e8"/>
      <path d="M-1.6,-13 V4 M1.7,-13 V4" stroke="#2f4078" stroke-width=".9"/>
    </g>
    <!-- highlighter -->
    <g transform="translate(850,23) rotate(45)">
      <rect x="-6" y="-13" width="12" height="14" rx="4.5" fill="url(#gic)"/>
      <path d="M-6,0 H6 L4.5,6 H-4.5 Z" fill="#fff"/>
      <path d="M-3,6 H3 L1.8,12 H-1.8 Z" fill="#fff"/>
      <path d="M-1.8,9 H1.8 L1.2,13 H-1.2 Z" fill="#8fb0e8"/>
      <path d="M-6,0 H6" stroke="#2f4078" stroke-width=".9"/>
    </g>
    <!-- marker circle -->
    <ellipse cx="884" cy="30" rx="12" ry="7.5" fill="none" stroke="#c8d4ec" stroke-width="1.6" opacity=".75"/>
    <g transform="translate(887,22) rotate(40)">
      <rect x="-6" y="-13" width="12" height="13" rx="5" fill="url(#gic)"/>
      <path d="M-6,-1 H6 V3 H-6 Z" fill="#fff"/>
      <path d="M-6,-1 H6" stroke="#2f4078" stroke-width=".9"/>
      <path d="M-5,3 H5 L1.8,11 H-1.8 Z" fill="#fff"/>
      <path d="M-1.8,9 H1.8 L1,13 H-1 Z" fill="#8fb0e8"/>
    </g>
    <!-- eraser -->
    <g transform="translate(920,26) rotate(48)">
      <rect x="-6.5" y="-13" width="13" height="25" rx="3" fill="url(#gic)"/>
      <rect x="-6.5" y="1" width="13" height="11" rx="2.5" fill="#fff"/>
      <path d="M-6.5,1 H6.5" stroke="#2f4078" stroke-width="1.1"/>
    </g>
    <!-- brushes cup -->
    <path d="M948,19 L952,29" stroke="#eaf8fe" stroke-width="3"/>
    <circle cx="947" cy="17" r="3" fill="#fff"/>
    <rect x="953.5" y="15" width="6" height="14" rx="2.5" fill="url(#gic)"/>
    <path d="M956.5,9 L959.5,15 H953.5 Z" fill="#eaf8fe"/>
    <path d="M968,17 L961,29" stroke="#eaf8fe" stroke-width="3"/>
    <path d="M966,16 Q970,12 973,13 Q971,17 968,19 Z" fill="#fff"/>
    <path d="M941,27 H972 V30 Q971,37 964,38 H949 Q942,37 941,30 Z" fill="url(#gic)"/>
    <path d="M941,27.5 H972" stroke="#2f4078" stroke-width="1"/>
    <!-- A -->
    <text transform="translate(1012,36.5) scale(1.2,1)" font-family="Liberation Serif" font-weight="bold" font-style="italic" font-size="33" fill="url(#gic)">A</text>
    <!-- record -->
    <circle cx="1062" cy="25" r="11" fill="#b9e0f8"/><circle cx="1062" cy="25" r="8" fill="#2f4078"/><circle cx="1062" cy="25" r="6" fill="#fff"/>
    <path d="M1049,20 L1060,25 L1049,30 Z" fill="#e8404a"/>
    <!-- trash -->
    <rect x="1086" y="17" width="22" height="3" rx="1.5" fill="url(#gic)"/>
    <rect x="1094" y="14" width="6" height="3" fill="#cfeafb"/>
    <path d="M1089,21 H1105 L1103,37 H1091 Z" fill="url(#gic)"/>
    <g fill="#2f4078"><rect x="1093" y="23" width="1.6" height="11"/><rect x="1096.5" y="23" width="1.6" height="11"/><rect x="1100" y="23" width="1.6" height="11"/></g>
    <!-- house check -->
    <path d="M1189,23 L1200,13 L1211,23 V36 H1193 Q1189,36 1189,33 Z" fill="url(#gic)"/>
    <path d="M1188,24 L1200,13 L1209,21" stroke="#e8e8ee" stroke-width="2" fill="none"/>
    <path d="M1195,27 L1200,34 L1213,20" stroke="#2f4078" stroke-width="2.5" fill="none"/>
    <!-- camera -->
    <rect x="1226" y="18" width="25" height="18" rx="4" fill="url(#gic)"/>
    <rect x="1233" y="14" width="9" height="4" rx="1.5" fill="#fff"/>
    <circle cx="1241" cy="27" r="5.5" fill="#2f4078"/><circle cx="1241" cy="27" r="3.8" fill="#fff"/>
    <rect x="1229" y="21" width="4" height="2" fill="#2f4078"/>
    <!-- clip -->
    <path d="M1261,35 L1280,16 Q1285,12 1287,17 Q1288,20 1284,24 L1268,38 M1266,33 L1281,19" stroke="#d6eefb" stroke-width="2.2" fill="none"/>
    <!-- gear -->
    <circle cx="1310" cy="25" r="10" fill="url(#gic)"/>
    <g stroke="#b9e0f8" stroke-width="4"><path d="M1310,12 V38 M1297,25 H1323 M1301,16 L1319,34 M1319,16 L1301,34"/></g>
    <circle cx="1310" cy="25" r="5.5" fill="#2f4078"/><circle cx="1310" cy="25" r="3.5" fill="#fff"/>
    <!-- level -->
    <rect x="1331" y="28" width="29" height="8" rx="3" fill="url(#gic)"/>
    <rect x="1333" y="23" width="25" height="3" fill="#41e05a"/>
    <path d="M1341,28 H1350 Q1350,31 1345.5,31 Q1341,31 1341,28 Z" fill="#41e05a"/>
  </g>
  <!-- MOZAIK logo -->
  <g font-family="Liberation Sans" font-weight="bold" font-size="23.5">
    <g fill="#27325c" stroke="#27325c" stroke-width="1.6" opacity=".9">
      <text transform="translate(1470,36.5) scale(1.1,.96)">M</text>
      <text transform="translate(1516,36.5) scale(1.27,.96)">ZAIK</text>
    </g>
    <g fill="#f3f4f8" stroke="#f3f4f8" stroke-width="1.6">
      <text transform="translate(1468.5,34.5) scale(1.1,.96)">M</text>
      <text transform="translate(1514.5,34.5) scale(1.27,.96)">ZAIK</text>
    </g>
  </g>
  <path d="M1491,25 L1502,14.5 V35.5 Z" fill="#f7e600"/>
  <path d="M1503,14.5 L1514,25 L1503,35.5 Z" fill="#f7e600"/>
  <rect x="1502" y="14" width="1" height="22" fill="#2a3868"/>
</svg>


</body></html>
